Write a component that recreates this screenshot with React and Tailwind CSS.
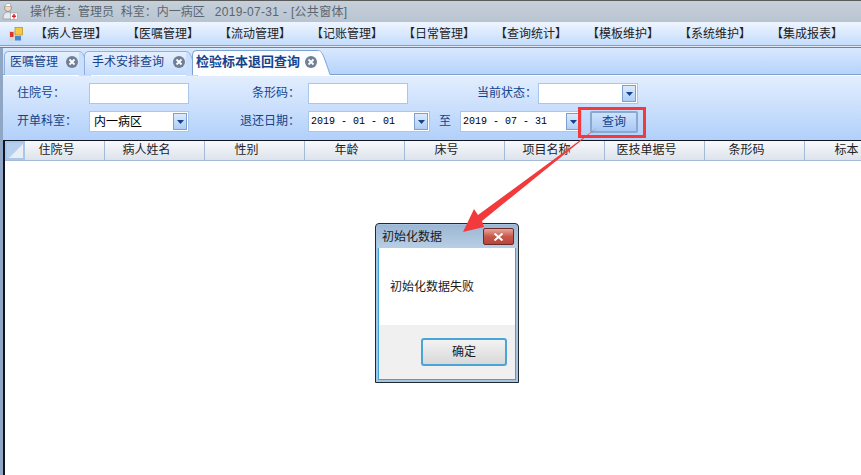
const FONT = "font-['Liberation_Sans','Noto_Sans_CJK_SC',sans-serif]"

const menus = ['病人管理', '医嘱管理', '流动管理', '记账管理', '日常管理', '查询统计', '模板维护', '系统维护', '集成报表']

const columns = [
    { name: '住院号', w: 'w-[80px]' },
    { name: '病人姓名', w: 'w-[100px]' },
    { name: '性别', w: 'w-[100px]' },
    { name: '年龄', w: 'w-[100px]' },
    { name: '床号', w: 'w-[100px]' },
    { name: '项目名称', w: 'w-[100px]' },
    { name: '医技单据号', w: 'w-[100px]' },
    { name: '条形码', w: 'w-[100px]' },
    { name: '标本', w: 'w-[100px]' },
]

const DownButton = () => (
    <div className="flex items-center justify-center w-[14px] h-[17px] border border-[#7c9fcf] bg-gradient-to-b from-[#dcebfe] to-[#aecdf6] shrink-0">
        <svg width="7" height="4" viewBox="0 0 7 4"><path d="M0 0h7L3.5 4z" fill="#15428b" /></svg>
    </div>
)

const TextBox = ({ w = 'w-[100px]' }) => (
    <div className={`${w} h-[21px] bg-white border border-[#a9c7e8] shrink-0`} />
)

const Combo = ({ value, w = 'w-[100px]', mono }) => (
    <div className={`${w} h-[21px] bg-white border border-[#a9c7e8] shrink-0 flex items-center justify-between pr-[1px]`}>
        <span className={mono ? "pl-[2px] text-[10px] text-black font-['Liberation_Mono',monospace] whitespace-pre" : 'pl-1 text-[12px] text-black'}>{value}</span>
        <DownButton />
    </div>
)

const Label = ({ text, w }) => (
    <div className={`${w} text-[12px] text-[#15428b] shrink-0 leading-[21px]`}>{text}</div>
)

const CloseDot = () => (
    <div className="w-[12px] h-[12px] rounded-full bg-[#6f7f96] flex items-center justify-center shrink-0">
        <svg width="8" height="8" viewBox="0 0 8 8"><path d="M1.500 1.500l5 5M6.500 1.500l-5 5" stroke="#fff" strokeWidth="1.800" /></svg>
    </div>
)

const Tab = ({ text, active, w, pad }) => (
    <div className={`relative ${w} rounded-tl-[5px] border-t border-l flex items-center pb-[3px] shrink-0 ${active ? 'z-10 h-[25px] border-[#7da2d2] bg-gradient-to-b from-[#f7fbff] to-white' : 'h-[24px] border-[#8fb0dc] bg-gradient-to-b from-[#e6f0fe] to-[#c4dcfc]'}`}>
        <span className={`${pad} whitespace-nowrap text-[#15428b] ${active ? 'text-[13px] font-bold' : 'text-[12px]'}`}>{text}</span>
        <span className="ml-auto mr-[1px]"><CloseDot /></span>
        <svg className="absolute left-full top-[-1px]" width="12" height="25" viewBox="0 0 12 25">
            <path d="M0 0C4 0 5 4 12 24.500V25H0z" fill={active ? '#ffffff' : '#c9dffc'} />
            <path d="M0 .5C4 .5 5 4 12 24.500" fill="none" stroke={active ? '#7da2d2' : '#8fb0dc'} />
        </svg>
    </div>
)

const App = () => {
    return (
        <div className={`relative w-[861px] h-[475px] overflow-hidden bg-white text-[12px] ${FONT}`}>
            {/* title bar */}
            <div className="h-[22px] border-t border-[#5a5a5a] bg-gradient-to-b from-[#c6d0da] to-[#b8c4d0] flex items-center pl-[2px]">
                <svg width="16" height="17" viewBox="0 0 16 17" className="shrink-0">
                    <circle cx="6" cy="5" r="3.500" fill="#f3d6bd" stroke="#6b6b6b" strokeWidth=".6" />
                    <path d="M2.500 3.500L5 .5h3l1 3z" fill="#fff" stroke="#8a8a8a" strokeWidth=".5" />
                    <path d="M1 16c0-5 2-7 5-7s5 2 5 7z" fill="#e4e9ee" stroke="#7b8794" strokeWidth=".6" />
                    <rect x="8.500" y="10" width="7" height="6.500" fill="#fff" stroke="#8a8a8a" strokeWidth=".5" />
                    <path d="M12 11v4.500M10 13.200h4" stroke="#d8282f" strokeWidth="1.400" />
                </svg>
                <span className="ml-[12px] text-[#5b6570] whitespace-pre leading-none">操作者：管理员  科室：内一病区</span>
                <span className="ml-[10px] text-[#5b6570] whitespace-pre leading-none tracking-[0.32px]">2019-07-31 - [公共窗体]</span>
            </div>

            {/* menu bar */}
            <div className="h-[24px] border-b border-[#7da2d2] bg-gradient-to-b from-[#eef5ff] to-[#c4dcfc] flex items-center pl-[9px]">
                <svg width="14" height="14" viewBox="0 0 14 14" className="shrink-0">
                    <rect x="0" y="4" width="6" height="10" fill="#d5d9de" />
                    <rect x="6" y=".5" width="7.500" height="7.500" fill="#f6c945" stroke="#b98a1c" strokeWidth=".7" />
                    <rect x="1" y="5" width="3.500" height="5" fill="#d8362a" />
                    <rect x="6" y="9" width="6" height="4.500" fill="#4a86d0" />
                </svg>
                <div className="flex ml-[12px] pt-[1px]">
                    {menus.map((m) => (
                        <span key={m} className="w-[92px] text-[12px] text-[#222] whitespace-nowrap leading-none">【{m}】</span>
                    ))}
                </div>
            </div>

            {/* gap under the menu */}
            <div className="h-[2px] border-t border-[#dfe8f3] bg-[#7f7f7f]" />

            <div className="h-[427px] flex">
                <div className="w-[3px] bg-[#8fa6c4] shrink-0" />
                <div className="flex-1 flex flex-col min-w-0">
                    {/* tabs */}
                    <div className="relative h-[27px] shrink-0 border-b border-[#7da2d2] bg-gradient-to-b from-[#d9e9fe] to-[#b5d3fb] flex items-end pl-[1px]">
                        <div className="flex items-end gap-[5px] -mb-px">
                            <Tab text="医嘱管理" w="w-[75px]" pad="pl-[5px]" />
                            <Tab text="手术安排查询" w="w-[102px]" pad="pl-[7px]" />
                            <Tab text="检验标本退回查询" active w="w-[126px] ml-[1px]" pad="pl-[3px]" />
                        </div>
                    </div>

                    {/* filter panel */}
                    <div className="h-[65px] bg-gradient-to-b from-[#e3eefe] to-[#b1d0fa] flex flex-col pl-[14px] pt-[7px] gap-[7px] shrink-0 border-t border-white">
                        <div className="flex items-center h-[21px]">
                            <Label text="住院号：" w="w-[72px]" />
                            <TextBox />
                            <Label text="条形码：" w="w-[119px] pl-[63px]" />
                            <TextBox />
                            <Label text="当前状态：" w="w-[130px] pl-[69px]" />
                            <Combo value="" />
                        </div>
                        <div className="flex items-center h-[21px]">
                            <Label text="开单科室：" w="w-[72px]" />
                            <Combo value="内一病区" />
                            <Label text="退还日期：" w="w-[119px] pl-[51px]" />
                            <Combo value="2019 - 01 - 01" w="w-[122px]" mono />
                            <Label text="至" w="w-[30px] pl-[9px]" />
                            <Combo value="2019 - 07 - 31" w="w-[122px]" mono />
                            <button className="ml-[8px] w-[48px] h-[22px] shrink-0 rounded-[2px] border-2 border-[#8aa9cf] bg-gradient-to-b from-[#cfe2fb] to-[#a8c9f5] text-[12px] text-[#15428b] leading-none">查询</button>
                        </div>
                    </div>

                    {/* grid */}
                    <div className="flex-1 border-t border-l-2 border-[#10151f] bg-white min-h-0 overflow-hidden">
                        <div className="flex h-[20px] border-b border-[#a3bbd6] bg-gradient-to-b from-[#f7f9fc] to-[#dde3ec]">
                            <div className="w-[20px] border-2 border-[#a9c7e8] bg-[#b7cfee] flex items-end justify-end shrink-0">
                                <svg width="14" height="14" viewBox="0 0 14 14"><path d="M14 0v14H0z" fill="#e9eef5" /></svg>
                            </div>
                            {columns.map((c) => (
                                <div key={c.name} className={`${c.w} shrink-0 border-r border-[#a3bbd6] text-center pr-[16px] text-[12px] leading-[19px] text-[#222] whitespace-nowrap`}>{c.name}</div>
                            ))}
                        </div>
                    </div>
                </div>
            </div>

            {/* red box round the query button */}
            <div className="absolute left-[578px] top-[107px] w-[68px] h-[31px] border-[3px] border-[#f23a3c]" />

            {/* dialog */}
            <div className="absolute left-[375px] top-[223px] w-[144px] h-[160px] rounded-t-[4px] border border-[#1f2a33] bg-[#a9c4e0] p-[1px] flex flex-col">
                <div className="h-[23px] flex items-center justify-between pl-[5px] pr-[3px] bg-gradient-to-b from-[#9db7d3] to-[#b7cfe6] shrink-0">
                    <span className="text-[12px] text-[#1a1a1a]">初始化数据</span>
                    <div className="w-[31px] h-[17px] rounded-[2px] border border-[#6b2a2a] bg-gradient-to-b from-[#e7a59a] via-[#c8584a] to-[#b8443a] flex items-center justify-center">
                        <svg width="11" height="8" viewBox="0 0 11 8"><path d="M1.500 .5l8 7M9.500 .5l-8 7" stroke="#fff" strokeWidth="2" /></svg>
                    </div>
                </div>
                <div className="flex-1 mx-[1px] mb-[1px] bg-white flex flex-col border border-[#3fa3d8] border-t-0 min-h-0">
                    <div className="flex-1 flex items-start pl-[11px] pt-[33px] text-[12px] text-[#1a1a1a] leading-none">初始化数据失败</div>
                    <div className="h-[54px] shrink-0 bg-[#f0f0f0] flex justify-end items-start pt-[13px] pr-[8px]">
                        <button className="w-[86px] h-[28px] rounded-[3px] border-2 border-[#4aa5d6] bg-gradient-to-b from-[#f3f3f3] to-[#d8d8d8] text-[12px] text-[#1a1a1a]">确定</button>
                    </div>
                </div>
            </div>

            {/* annotation arrow */}
            <svg className="absolute left-[455px] top-[120px]" width="150" height="115" viewBox="0 0 150 115">
                <path d="M143 7L23 95L19 89L8 112L29 107L27 101Z" fill="#f23a3c" />
            </svg>
        </div>
    )
}

export default App
